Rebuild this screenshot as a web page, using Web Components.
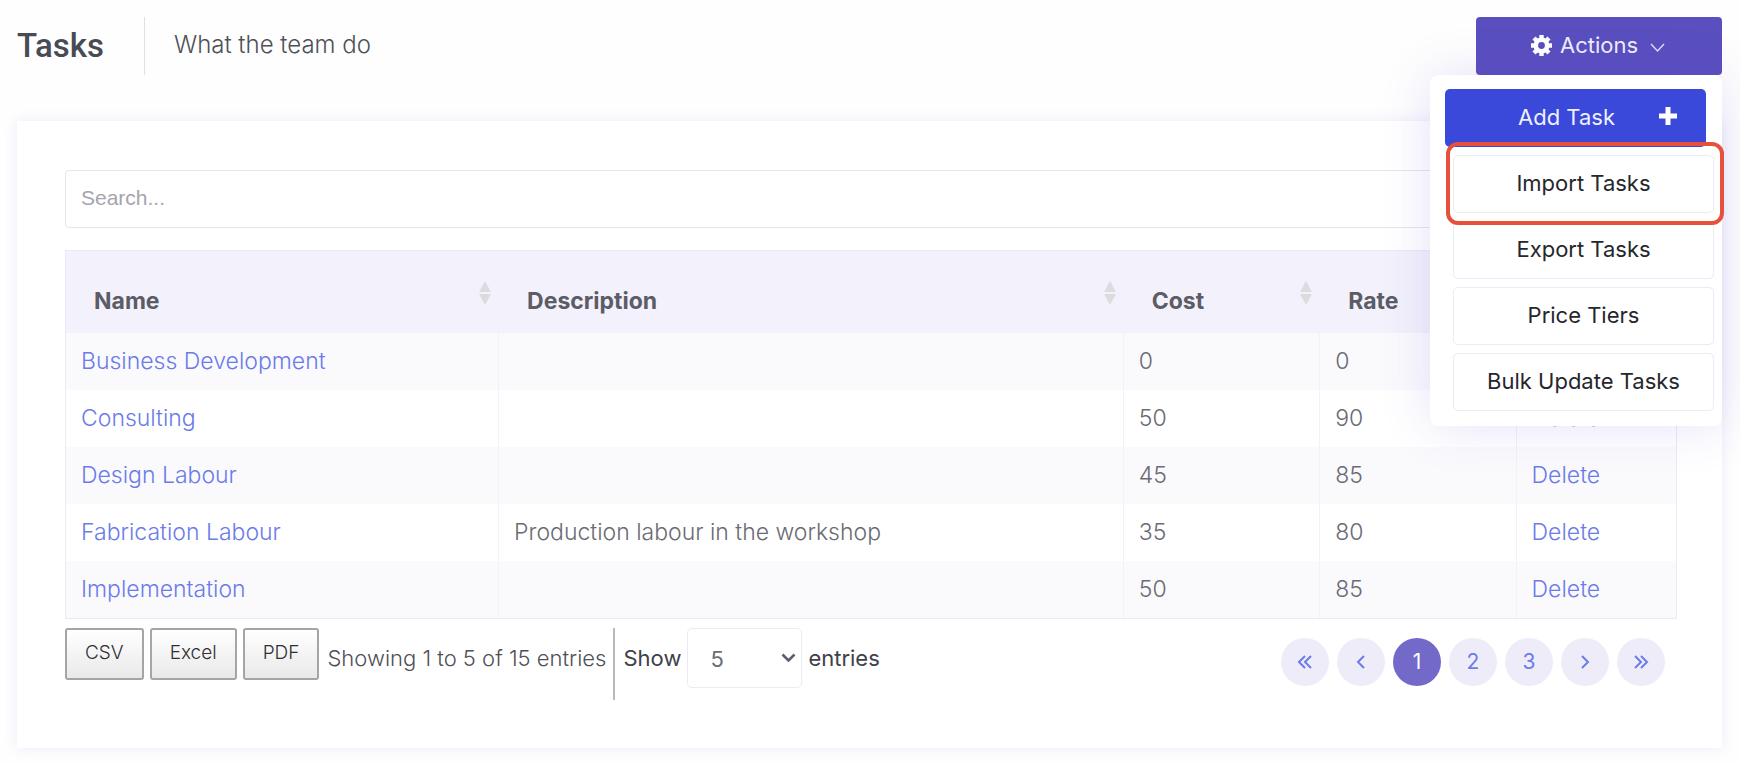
<!DOCTYPE html>
<html lang="en">
<head>
<meta charset="utf-8">
<title>Tasks</title>
<style>
  body {
    --brand: #5a4fbf;
    --primary: #3a49d9;
    --link: #6c7be8;
    --line: #ebebf6;
    margin: 0;
    padding: 17px 18px 16px 17px;
    background: #fefefe;
    color: #4f5057;
    font: 300 23px/28px Inter, "Open Sans", sans-serif;
  }
</style>
</head>
<body>
<page-header>
  <span slot="title">Tasks</span>
  <span slot="subtitle">What the team do</span>
  <action-menu slot="actions" label="Actions">
    <menu-action kind="primary">Add Task</menu-action>
    <menu-action active>Import Tasks</menu-action>
    <menu-action>Export Tasks</menu-action>
    <menu-action>Price Tiers</menu-action>
    <menu-action>Bulk Update Tasks</menu-action>
  </action-menu>
</page-header>
<task-card>
  <search-box slot="search"></search-box>
  <task-table></task-table>
  <table-tools slot="footer"></table-tools>
  <page-nav slot="footer" current="1" pages="3"></page-nav>
</task-card>

<script>
class PageHeader extends HTMLElement {
  constructor() {
    super();
    this._root = this.attachShadow({mode: 'open'});
  }
  connectedCallback() {
    this._root.innerHTML = `
      <style>
        :host {
          display: flex;
          align-items: center;
          height: 58px;
          margin-bottom: 46px;
        }
        h1 {
          margin: 0;
          padding-right: 40px;
          border-right: 1px solid #dfe0ec;
          color: #484a54;
          font: 500 33px/58px Roboto, sans-serif;
        }
        .subtitle {
          flex: 1;
          padding: 0 0 2px 29px;
          font-size: 24px;
        }
      </style>
      <h1><slot name="title"></slot></h1>
      <div class="subtitle"><slot name="subtitle"></slot></div>
      <slot name="actions"></slot>
    `;
  }
}

class ActionMenu extends HTMLElement {
  constructor() {
    super();
    this._root = this.attachShadow({mode: 'open'});
  }
  connectedCallback() {
    this._root.innerHTML = `
      <style>
        :host {
          display: block;
          position: relative;
          z-index: 2;
          font-size: 22px;
        }
        .toggle {
          display: flex;
          align-items: center;
          justify-content: center;
          gap: 8px;
          width: 246px;
          height: 58px;
          padding: 0 2px 2px 0;
          border: 0;
          border-radius: 4px;
          background: var(--brand);
          color: #f0eefc;
          font: inherit;
          font-weight: 400;
        }
        .chevron {
          margin: 6px 0 0 4px;
        }
        .menu {
          position: absolute;
          top: 100%;
          right: 0;
          display: flex;
          flex-direction: column;
          gap: 8px;
          width: 269px;
          padding: 14px 8px 15px 15px;
          border-radius: 8px;
          background: #fff;
          box-shadow: 0 0 50px rgba(82, 63, 205, .15);
        }
      </style>
      <button class="toggle" aria-expanded="true">
        <svg width="21" height="21" viewBox="0 0 21 21" aria-hidden="true">
          <circle cx="10.500" cy="10.500" r="5.700" fill="none" stroke="#fff" stroke-width="4.600"/>
          <path d="M10.500 0v4M10.500 17v4M0 10.500h4M17 10.500h4M3 3l3 3M15 15l3 3M18 3l-3 3M6 15l-3 3" stroke="#fff" stroke-width="4.400"/>
        </svg>
        <span>${this.getAttribute('label')}</span>
        <svg class="chevron" width="15" height="10" viewBox="0 0 15 10" aria-hidden="true">
          <path d="M1 1l6.500 7L14 1" fill="none" stroke="#e4e0fa" stroke-width="1.400"/>
        </svg>
      </button>
      <div class="menu"><slot></slot></div>
    `;
  }
}

class MenuAction extends HTMLElement {
  constructor() {
    super();
    this._root = this.attachShadow({mode: 'open'});
  }
  connectedCallback() {
    const plus = this.getAttribute('kind') === 'primary' ? `
      <svg width="20" height="20" viewBox="0 0 20 20" aria-hidden="true">
        <path d="M10 1v18M1 10h18" stroke="#fff" stroke-width="5"/>
      </svg>` : '';
    this._root.innerHTML = `
      <style>
        :host {
          display: block;
          position: relative;
          margin-left: 8px;
        }
        :host([kind="primary"]) {
          margin: 0 8px 0 0;
        }
        button {
          display: block;
          width: 100%;
          height: 58px;
          padding: 0 0 3px;
          border: 1px solid var(--line);
          border-radius: 5px;
          background: #fff;
          color: #26272c;
          font: inherit;
          font-weight: 400;
        }
        :host([kind="primary"]) button {
          display: grid;
          grid-template-columns: 1fr auto 1fr;
          align-items: center;
          padding: 0 28px 2px 10px;
          border: 0;
          background: var(--primary);
          color: #eef0ff;
        }
        :host([kind="primary"]) span {
          grid-column: 2;
        }
        svg {
          justify-self: end;
          margin-bottom: 2px;
        }
        /* ring round the entry in use */
        :host([active])::after {
          content: "";
          position: absolute;
          z-index: 1;
          inset: -13px -10px -12px -7px;
          border: 4px solid #e5513c;
          border-radius: 12px;
          pointer-events: none;
        }
      </style>
      <button><span><slot></slot></span>${plus}</button>
    `;
  }
}

class TaskCard extends HTMLElement {
  constructor() {
    super();
    this._root = this.attachShadow({mode: 'open'});
  }
  connectedCallback() {
    this._root.innerHTML = `
      <style>
        :host {
          display: block;
          padding: 49px 45px 48px 48px;
          background: #fff;
          box-shadow: 0 0 13px rgba(82, 63, 205, .1);
        }
        .search {
          margin-bottom: 22px;
        }
        .footer {
          display: flex;
          flex-wrap: wrap;
          justify-content: space-between;
          margin-top: 9px;
        }
      </style>
      <div class="search"><slot name="search"></slot></div>
      <slot></slot>
      <div class="footer"><slot name="footer"></slot></div>
    `;
  }
}

class SearchBox extends HTMLElement {
  constructor() {
    super();
    this._root = this.attachShadow({mode: 'open'});
  }
  connectedCallback() {
    this._root.innerHTML = `
      <style>
        :host {
          display: block;
        }
        input {
          box-sizing: border-box;
          display: block;
          width: 100%;
          height: 58px;
          padding: 0 15px 2px;
          border: 1px solid #e4e5f0;
          border-radius: 4px;
          font: 400 21px "Liberation Sans", Arial, sans-serif;
        }
        input::placeholder {
          color: #a3a5b0;
        }
      </style>
      <input type="search" placeholder="Search..." aria-label="Search">
    `;
  }
}

class TaskTable extends HTMLElement {
  constructor() {
    super();
    this._root = this.attachShadow({mode: 'open'});
    // name, description, cost, rate, can be deleted
    this.tasks = [
      ['Business Development', '', 0, 0, false],
      ['Consulting', '', 50, 90, true],
      ['Design Labour', '', 45, 85, true],
      ['Fabrication Labour', 'Production labour in the workshop', 35, 80, true],
      ['Implementation', '', 50, 85, true]
    ];
  }
  connectedCallback() {
    const sort = `
      <svg width="14" height="24" viewBox="0 0 14 24" aria-hidden="true">
        <path d="M7 0l6 11H1zM1 13h12L7 24z" fill="#dcdcdf"/>
      </svg>`;
    const head = ['Name', 'Description', 'Cost', 'Rate']
      .map(name => `<th scope="col"><div>${name}${sort}</div></th>`).join('');
    const rows = this.tasks.map(([name, description, cost, rate, removable]) => `
      <tr>
        <td><a href="#">${name}</a></td>
        <td>${description}</td>
        <td>${cost}</td>
        <td>${rate}</td>
        <td>${removable ? '<a href="#">Delete</a>' : ''}</td>
      </tr>`).join('');
    this._root.innerHTML = `
      <style>
        :host {
          display: block;
        }
        table {
          width: 100%;
          table-layout: fixed;
          border-collapse: separate;
          border-spacing: 0;
          border: 1px solid var(--line);
        }
        .name { width: 26.9%; }
        .description { width: 38.8%; }
        .number { width: 12.2%; }
        thead {
          background: #f3f1fb;
        }
        th {
          height: 82px;
          padding: 0 7px 0 28px;
          color: #5b5c66;
          font-size: 23px;
          font-weight: 700;
          text-align: left;
        }
        th div {
          display: flex;
          justify-content: space-between;
          padding-top: 17px;
        }
        th svg {
          margin-top: -6px;
        }
        td {
          height: 57px;
          box-sizing: border-box;
          padding: 0 15px 1px;
          border-right: 1px solid #f1f1f8;
          color: #6a6b74;
        }
        td:last-child {
          border-right: 0;
        }
        tbody tr:nth-child(odd) {
          background: #fafafd;
        }
        a {
          color: var(--link);
          text-decoration: none;
        }
      </style>
      <table>
        <colgroup>
          <col class="name"><col class="description"><col class="number"><col class="number"><col>
        </colgroup>
        <thead><tr>${head}<th></th></tr></thead>
        <tbody>${rows}</tbody>
      </table>
    `;
  }
}

class TableTools extends HTMLElement {
  constructor() {
    super();
    this._root = this.attachShadow({mode: 'open'});
  }
  connectedCallback() {
    this._root.innerHTML = `
      <style>
        :host {
          display: flex;
          align-items: flex-start;
          font-size: 22px;
        }
        .export {
          display: flex;
          gap: 6px;
          margin-right: 8px;
        }
        .export button {
          height: 52px;
          padding: 0 18px 2px;
          border: 2px solid #a5a5a5;
          border-radius: 3px;
          background: linear-gradient(#fff, #e9e9e9);
          color: #2f2f33;
          font: inherit;
          font-size: 19px;
        }
        .info, .length {
          line-height: 60px;
        }
        .length {
          display: flex;
          gap: 6px;
          height: 72px;
          margin-left: 7px;
          padding-left: 8px;
          border-left: 2px solid #b9b9bc;
          color: #404148;
          font-weight: 400;
        }
        .pick {
          position: relative;
        }
        select {
          appearance: none;
          width: 115px;
          height: 60px;
          padding: 0 22px;
          border: 1px solid var(--line);
          border-radius: 5px;
          background: #fff;
          color: #6a6b74;
          font: inherit;
          display: block;
        }
        .pick svg {
          position: absolute;
          top: 25px;
          right: 6px;
          pointer-events: none;
        }
      </style>
      <div class="export">
        <button>CSV</button>
        <button>Excel</button>
        <button>PDF</button>
      </div>
      <div class="info">Showing 1 to 5 of 15 entries</div>
      <div class="length">
        <label for="length">Show</label>
        <div class="pick">
          <select id="length">
            <option>5</option>
          </select>
          <svg width="15" height="10" viewBox="0 0 15 10" aria-hidden="true">
            <path d="M1.500 1.500l6 6 6-6" fill="none" stroke="#5d5e6c" stroke-width="2.600"/>
          </svg>
        </div>
        <span>entries</span>
      </div>
    `;
  }
}

class PageNav extends HTMLElement {
  constructor() {
    super();
    this._root = this.attachShadow({mode: 'open'});
  }
  icon(path) {
    return `<svg width="16" height="16" viewBox="0 0 16 16" aria-hidden="true">
      <path d="${path}" fill="none" stroke="currentColor" stroke-width="2"/></svg>`;
  }
  connectedCallback() {
    const current = Number(this.getAttribute('current'));
    let pages = '';
    for (let i = 1; i <= Number(this.getAttribute('pages')); i++) {
      pages += `<button${i === current ? ' class="current" aria-current="page"' : ''}>${i}</button>`;
    }
    this._root.innerHTML = `
      <style>
        :host {
          display: block;
          padding: 10px 12px 0 0;
          font-size: 21px;
        }
        nav {
          display: flex;
          gap: 8px;
        }
        button {
          display: grid;
          place-items: center;
          width: 48px;
          height: 48px;
          padding: 0;
          border: 0;
          border-radius: 50%;
          background: #eeecf9;
          color: var(--link);
          font: inherit;
          font-weight: 400;
        }
        .current {
          background: #7369c9;
          color: #fff;
        }
      </style>
      <nav aria-label="Pages">
        <button aria-label="First">${this.icon('M8 2L2 8l6 6M14 2L8 8l6 6')}</button>
        <button aria-label="Previous">${this.icon('M11 2L5 8l6 6')}</button>
        ${pages}
        <button aria-label="Next">${this.icon('M5 2l6 6-6 6')}</button>
        <button aria-label="Last">${this.icon('M2 2l6 6-6 6M8 2l6 6-6 6')}</button>
      </nav>
    `;
  }
}

window.customElements.define('page-header', PageHeader);
window.customElements.define('action-menu', ActionMenu);
window.customElements.define('menu-action', MenuAction);
window.customElements.define('task-card', TaskCard);
window.customElements.define('search-box', SearchBox);
window.customElements.define('task-table', TaskTable);
window.customElements.define('table-tools', TableTools);
window.customElements.define('page-nav', PageNav);
</script>
</body>
</html>
